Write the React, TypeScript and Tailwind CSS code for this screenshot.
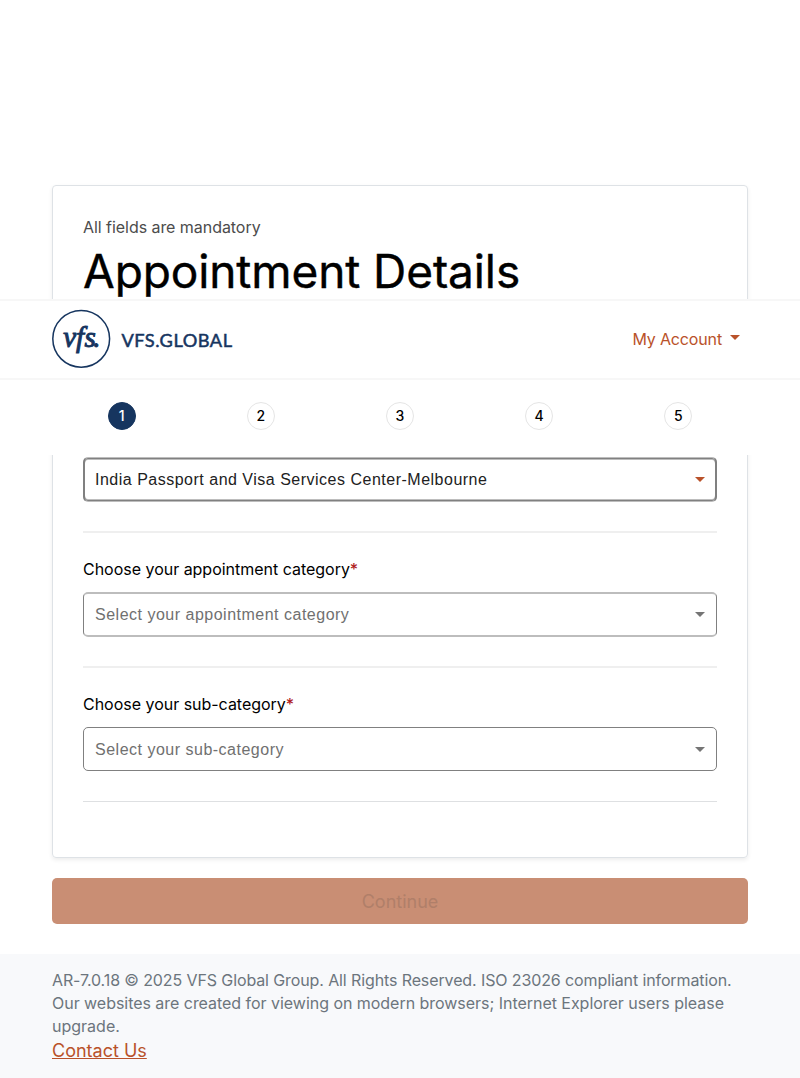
import React from "react";

const steps = [1, 2, 3, 4, 5];

function Caret({ className }: { className: string }) {
  return (
    <svg viewBox="0 0 10 5" className={`h-[5px] w-[10px] shrink-0 ${className}`}>
      <path d="M0 0H10L5 5Z" fill="currentColor" />
    </svg>
  );
}

function Logo() {
  return (
    <svg viewBox="0 0 182 60" className="-mt-px h-[60px] w-[182px] text-[#16355f]" fill="currentColor">
      <circle cx="29.2" cy="29.8" r="28.4" fill="none" stroke="currentColor" strokeWidth="1.5" />
      <text x="11.3 24 32.5 41.2" y="38" fontFamily="Liberation Serif, serif" fontSize="29" fontStyle="italic" stroke="currentColor" strokeWidth="1">
        vfs.
      </text>
      <text x="69.5" y="37.5" fontFamily="Lato, sans-serif" fontSize="18" fontWeight="400" stroke="currentColor" strokeWidth="0.5" letterSpacing="0.5" textLength="111" lengthAdjust="spacingAndGlyphs">
        VFS.GLOBAL
      </text>
    </svg>
  );
}

function Label({ children }: { children: React.ReactNode }) {
  return (
    <div className="h-6 text-[16px] leading-6 tracking-[-0.02px] text-black">
      {children}
      <span className="font-medium text-[#b01c1c]">*</span>
    </div>
  );
}

export default function App() {
  return (
    <div className="relative h-[1078px] w-[800px] overflow-hidden bg-white pt-[185px] font-['Inter',sans-serif]">
      <main className="mx-[52px]">
        <section className="flex h-[673px] flex-col rounded-[4px] border border-[#dee2e6] px-[30px] pt-[29px] shadow-[0_2px_4px_rgba(0,0,0,0.075)]">
          <p className="h-6 text-[16px] leading-6 tracking-[-0.05px] text-[#4c4c4c]">All fields are mandatory</p>
          <h1 className="h-[218px] pt-[3px] text-[46px] leading-[58px] tracking-[-0.1px] whitespace-nowrap text-black [-webkit-text-stroke:0.4px_black]">Appointment Details</h1>

          <div className="flex h-[45px] items-center justify-between rounded-[5px] border-x-2 border-y border-x-[#808080] border-y-[#bdbdbd] pr-[10px] pl-[10px] font-['Liberation_Sans',sans-serif] text-[16px] tracking-[0.5px] text-[#212121] shadow-[inset_0_1px_#808080,inset_0_-1px_#808080,inset_0_2px_#bdbdbd,inset_0_-2px_#bdbdbd]">
            <span>India Passport and Visa Services Center-Melbourne</span>
            <Caret className="text-[#b9522a]" />
          </div>
          <div className="mt-[29px] h-[2px] shrink-0 bg-[#efefef]" />

          <div className="mt-[24px]">
            <Label>Choose your appointment category</Label>
          </div>
          <div className="mt-[11px] flex h-[45px] shrink-0 items-center justify-between rounded-[5px] border-x border-y-2 border-x-[#808080] border-y-[#bdbdbd] px-[11px] font-['Liberation_Sans',sans-serif] text-[16px] tracking-[0.5px] text-[#707070]">
            <span>Select your appointment category</span>
            <Caret className="text-[#757575]" />
          </div>
          <div className="mt-[29px] h-[2px] shrink-0 bg-[#efefef]" />

          <div className="mt-[24px]">
            <Label>Choose your sub-category</Label>
          </div>
          <div className="mt-[11px] flex h-[44px] shrink-0 items-center justify-between rounded-[5px] border border-[#808080] px-[11px] font-['Liberation_Sans',sans-serif] text-[16px] tracking-[0.5px] text-[#707070]">
            <span className="pt-px">Select your sub-category</span>
            <Caret className="text-[#757575]" />
          </div>
          <div className="mt-[30px] h-px shrink-0 bg-[#dee0e2]" />
        </section>

        <button disabled className="mt-[20px] h-[46px] w-full rounded-[5px] bg-[#c98e74] text-[18px] text-[#b07f69]">
          Continue
        </button>
      </main>

      <footer className="mt-[30px] h-[124px] bg-[#f8f9fb] px-[52px] pt-[15px] text-[16px] leading-[23px] text-[#6c757d]">
        <p className="tracking-[-0.11px] whitespace-nowrap">AR-7.0.18 © 2025 VFS Global Group. All Rights Reserved. ISO 23026 compliant information.</p>
        <p className="tracking-[-0.035px] whitespace-nowrap">Our websites are created for viewing on modern browsers; Internet Explorer users please</p>
        <p>upgrade.</p>
        <a href="#" className="block w-fit text-[18px] leading-[26px] text-[#b9522a] underline">Contact Us</a>
      </footer>

      <header className="absolute top-[299px] left-0 h-[156px] w-full bg-white">
        <div className="flex h-[81px] items-center justify-between border-y-2 border-[#f7f7f7] pr-[60px] pl-[52px]">
          <Logo />
          <button className="-mt-[2px] flex items-center gap-[8px] text-[16px] tracking-[-0.15px] text-[#b9522a]">
            My Account
            <Caret className="-mt-[2px] text-[#b9522a]" />
          </button>
        </div>
        <ol className="mx-[52px] grid h-[75px] grid-cols-5 justify-items-center pt-[22px]">
          {steps.map((n) => (
            <li
              key={n}
              className={`flex h-[28px] w-[28px] items-center justify-center rounded-full border text-[14px] font-medium ${
                n === 1 ? "border-[#16355f] bg-[#16355f] text-white" : "border-[#e5e5e5] bg-white text-black"
              }`}
            >
              <span className="-mt-px">{n}</span>
            </li>
          ))}
        </ol>
      </header>
    </div>
  );
}
